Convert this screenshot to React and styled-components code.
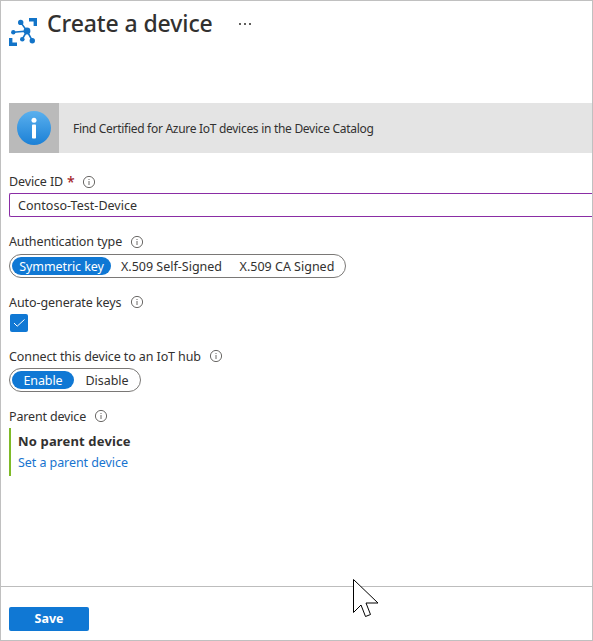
import React from 'react';
import styled, { createGlobalStyle } from 'styled-components';

const Global = createGlobalStyle`
  * { box-sizing: border-box; }
  html, body { margin: 0; padding: 0; background: #fff; overflow: hidden; }
  body { font-family: "Noto Sans", "Open Sans", sans-serif; font-size: 12.5px; color: #323130; }
`;

const Blade = styled.div`
  position: relative;
  display: flex;
  flex-direction: column;
  width: 593px;
  height: 641px;
  border: 1px solid #c0c0c0;
  background: #fff;
  overflow: hidden;
`;

const Text = styled.span`
  white-space: nowrap;
  letter-spacing: ${(p) => p.$ls || 0}px;
`;

const Header = styled.header`
  display: flex;
  flex: none;
  height: 102px;
  padding-left: 8px;
`;

const HubIcon = styled.svg`
  flex: none;
  width: 28px;
  height: 28px;
  margin-top: 17px;
`;

const Title = styled.h1`
  width: 166px;
  margin: 6px 0 0 10px;
  font-size: 23px;
  line-height: 32px;
  font-weight: 500;
  letter-spacing: -0.1px;
  white-space: nowrap;
`;

const More = styled.div`
  display: flex;
  gap: 3px;
  margin: 22px 0 0 26px;
`;

const Dot = styled.i`
  width: 2px;
  height: 2px;
  background: #605e5c;
`;

const Banner = styled.section`
  display: flex;
  flex: none;
  align-items: center;
  height: 50px;
  margin-left: 8px;
  background: #e4e4e4;
`;

const BannerBadge = styled.div`
  display: flex;
  align-items: center;
  justify-content: center;
  width: 50px;
  height: 50px;
  margin-right: 14px;
  background: #bababa;
`;

const BannerText = styled(Text)`
  font-size: 12px;
`;

const Form = styled.main`
  flex: 1;
  padding: 19px 0 0 8px;
`;

const Label = styled.label`
  display: flex;
  align-items: center;
  height: 20px;
  margin-top: ${(p) => p.$top || 0}px;
`;

const LabelText = styled(Text)`
  width: ${(p) => p.$w}px;
  padding-bottom: ${(p) => (p.$raised ? 2 : 0)}px;
`;

const Required = styled.span`
  width: 15px;
  padding-bottom: 2px;
  color: #a4262c;
  font-weight: 500;
  font-size: 14px;
`;

const Field = styled.div`
  display: flex;
  align-items: center;
  height: 24px;
  margin-top: 1px;
  padding-left: 8px;
  border: 1px solid #8a2da5;
  border-right: 0;
  border-radius: 2px 0 0 2px;
`;

const PillGroup = styled.div`
  display: flex;
  align-items: center;
  width: ${(p) => p.$w}px;
  height: 24px;
  margin-top: 2px;
  padding-left: 2px;
  border: 1px solid #7a7876;
  border-radius: 12px;
`;

const Pill = styled.div`
  display: flex;
  flex: none;
  align-items: center;
  justify-content: center;
  width: ${(p) => p.$w}px;
  height: 18px;
  border-radius: 9px;
  color: ${(p) => (p.$on ? '#fff' : '#323130')};
  background: ${(p) => (p.$on ? '#1078d4' : 'transparent')};
`;

const Check = styled.div`
  display: flex;
  width: 18px;
  height: 18px;
  margin: 2px 0 0 1px;
  border-radius: 2px;
  background: #1078d4;
`;

const Parent = styled.div`
  display: flex;
  flex-direction: column;
  height: 48px;
  margin-top: 2px;
  padding: 3px 0 0 7px;
  border-left: 2px solid #7fba28;
  line-height: 21px;
`;

const ParentName = styled(Text)`
  font-size: 13px;
  font-weight: 700;
`;

const Link = styled(Text)`
  color: #1874cf;
`;

const Footer = styled.footer`
  flex: none;
  height: 54px;
  padding: 20px 0 0 8px;
  border-top: 1px solid #bdbdbd;
`;

const Save = styled.button`
  display: flex;
  align-items: center;
  justify-content: center;
  width: 80px;
  height: 24px;
  padding: 0 0 1px;
  border: 0;
  border-radius: 2px;
  background: #1078d4;
  color: #fff;
  font: 700 12.5px "Noto Sans", sans-serif;
`;

const Cursor = styled.svg`
  position: absolute;
  left: 351px;
  top: 577px;
  width: 28px;
  height: 42px;
`;

const InfoIcon = () => (
  <svg width="14" height="14" viewBox="0 0 14 14">
    <circle cx="7" cy="7" r="5.6" fill="none" stroke="#6b6967" />
    <path d="M7 6v4M7 4v1" stroke="#6b6967" />
  </svg>
);

export default function App() {
  return (
    <Blade>
      <Global />
      <Header>
        <HubIcon viewBox="0 0 28 28">
          <g fill="#1374c8">
            <path d="M20 0h8v8h-3.400V3.600H20zM0 20h3.400v4.600H8V28H0z" />
            <circle cx="18" cy="13" r="3.4" />
            <circle cx="11.7" cy="4.4" r="2.7" />
            <circle cx="4.3" cy="14.3" r="2.2" />
            <circle cx="13.3" cy="21.2" r="2.3" />
            <circle cx="23.3" cy="22.7" r="2.7" />
          </g>
          <path d="M11.7 4.4 18 13 4.3 14.3M13.3 21.2 18 13l5.3 9.7" fill="none" stroke="#1374c8" strokeWidth="1.6" />
        </HubIcon>
        <Title>Create a device</Title>
        <More><Dot /><Dot /><Dot /></More>
      </Header>
      <Banner>
        <BannerBadge>
          <svg width="34" height="34" viewBox="0 0 34 34">
            <defs>
              <linearGradient id="badge" x1="0" y1="0" x2="0" y2="1">
                <stop offset="0" stopColor="#5ab0ee" />
                <stop offset="1" stopColor="#1b80d6" />
              </linearGradient>
            </defs>
            <circle cx="17" cy="17" r="17" fill="url(#badge)" />
            <circle cx="17" cy="9.3" r="2.5" fill="#fff" />
            <rect x="15" y="13.5" width="4" height="14" rx="0.8" fill="#fff" />
          </svg>
        </BannerBadge>
        <BannerText $ls={-0.29}>Find Certified for Azure IoT devices in the Device Catalog</BannerText>
      </Banner>
      <Form>
        <Label><LabelText $raised $ls={-0.13} $w={58}>Device ID</LabelText><Required>*</Required><InfoIcon /></Label>
        <Field><Text $ls={0.03}>Contoso-Test-Device</Text></Field>
        <Label $top={15}><LabelText $raised $ls={-0.12} $w={121}>Authentication type</LabelText><InfoIcon /></Label>
        <PillGroup $w={337}>
          <Pill $on $w={99}><Text $ls={-0.1}>Symmetric key</Text></Pill>
          <Pill $w={121}><Text>X.509 Self-Signed</Text></Pill>
          <Pill $w={110}><Text>X.509 CA Signed</Text></Pill>
        </PillGroup>
        <Label $top={14}><LabelText $ls={-0.08} $w={121}>Auto-generate keys</LabelText><InfoIcon /></Label>
        <Check>
          <svg width="18" height="18" viewBox="0 0 18 18">
            <path d="M4 9l3.2 3.2L14.500 5.500" fill="none" stroke="#fff" />
          </svg>
        </Check>
        <Label $top={14}><LabelText $ls={-0.1} $w={200}>Connect this device to an IoT hub</LabelText><InfoIcon /></Label>
        <PillGroup $w={132}>
          <Pill $on $w={62}><Text $ls={-0.1}>Enable</Text></Pill>
          <Pill $w={66}><Text $ls={-0.05}>Disable</Text></Pill>
        </PillGroup>
        <Label $top={14}><LabelText $ls={-0.16} $w={85}>Parent device</LabelText><InfoIcon /></Label>
        <Parent>
          <ParentName $ls={0.15}>No parent device</ParentName>
          <Link $ls={-0.07}>Set a parent device</Link>
        </Parent>
      </Form>
      <Footer><Save><Text>Save</Text></Save></Footer>
      <Cursor viewBox="0 0 28 42">
        <path d="M1.500 1.500v33l7.500-7.500 4.500 11.500 5-2-4.500-11.500h12z" fill="#fff" stroke="#000" />
      </Cursor>
    </Blade>
  );
}
